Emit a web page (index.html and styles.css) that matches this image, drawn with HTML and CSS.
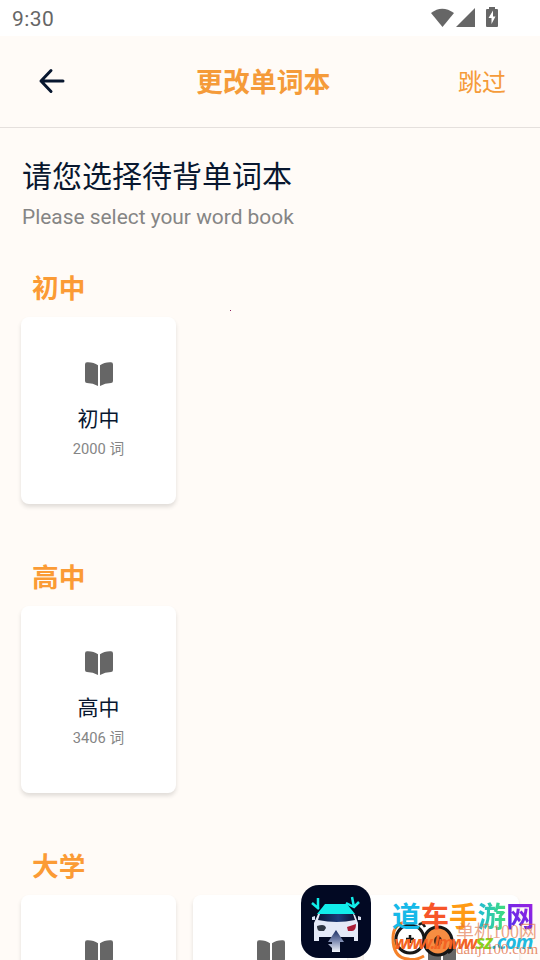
FILE: index.html
```html
<!DOCTYPE html>
<html lang="zh-CN">
<head>
<meta charset="utf-8">
<title>更改单词本</title>
<link rel="stylesheet" href="styles.css">
</head>
<body>
<svg class="symbols" aria-hidden="true">
  <symbol id="book" viewBox="0 0 30 26"><path d="M1 3.5Q1 1.3 3 1.3Q9.5 1 14 4.2V25Q9 22 3 22Q1 22 1 20ZM16 4.2Q20.500 1 27 1.300Q29 1.300 29 3.500V20Q29 22 27 22Q21 22 16 25Z"/></symbol>
</svg>
<div class="screen">
  <div class="status">
    <span class="time">9:30</span>
    <svg class="indicators" width="70" height="22" viewBox="0 0 70 22">
      <path d="M1 6Q12-2.500 24 6L12.500 20Z"/>
      <path d="M26 20L45 1V20Z"/>
      <path fill-rule="evenodd" d="M57 2H59V0H65V2H67Q68 2 68 3V19Q68 20 67 20H57Q56 20 56 19V3Q56 2 57 2ZM63 3.500L58.500 11H61.500V17L65.500 9.500H63Z"/>
    </svg>
  </div>
  <header class="bar">
    <svg class="back" width="28" height="26" viewBox="0 0 28 26"><path d="M13 2.500L3 13L13 23.500M3 13H25"/></svg>
    <h1>更改单词本</h1>
    <span class="skip">跳过</span>
  </header>
  <main>
    <h2>请您选择待背单词本</h2>
    <p class="hint">Please select your word book</p>
    <section>
      <h3>初中</h3>
      <div class="cards">
        <article class="card"><svg class="book"><use href="#book"/></svg><strong>初中</strong><small>2000 词</small></article>
      </div>
    </section>
    <section>
      <h3>高中</h3>
      <div class="cards">
        <article class="card"><svg class="book"><use href="#book"/></svg><strong>高中</strong><small>3406 词</small></article>
      </div>
    </section>
    <section>
      <h3>大学</h3>
      <div class="cards">
        <article class="card"><svg class="book"><use href="#book"/></svg></article>
        <article class="card"><svg class="book"><use href="#book"/></svg></article>
        <article class="card"><svg class="book"><use href="#book"/></svg></article>
      </div>
    </section>
  </main>
  <i class="dot"></i>
  <svg class="app-logo" width="70" height="74" viewBox="0 0 70 74">
    <defs>
      <linearGradient id="glass"><stop offset="0" stop-color="#091637"/><stop offset=".55" stop-color="#1c3a78"/><stop offset="1" stop-color="#0a1230"/></linearGradient>
      <linearGradient id="arrow" x1="0" y1="0" x2="0" y2="1"><stop offset="0" stop-color="#172b61"/><stop offset=".45" stop-color="#7482ab"/><stop offset="1" stop-color="#f2f5fc"/></linearGradient>
    </defs>
    <rect width="70" height="73" rx="18" fill="#020923"/>
    <path d="M17 29L20 28H51L54 30L57 38V56H53V52H18V56H13V38Z" fill="#e4e9f7"/>
    <path d="M16 29L24 19H46L54 29Z" fill="#12edea"/>
    <path d="M19 29H52L54 35Q36 39 17 35Z" fill="url(#glass)"/>
    <path d="M11 32L14 31V35L11 35ZM57 31L60 32V35H57Z" fill="#dce3f3"/>
    <path d="M16 41Q24 38 25 43L23 46H19Q16 46 16 41Z" fill="#303743"/>
    <path d="M46 42L55 39Q55 46 51 46H47Z" fill="#a91d36"/>
    <path d="M35 45L43 57H39V67H31V63L27 59H31V57H27Z" fill="url(#arrow)"/>
    <path d="M17 13V23.500M11 18L18 24M51 12L53 22M45 18L53 22L58 17" fill="none" stroke="#12edea" stroke-width="2.500"/>
  </svg>
  <div class="watermark">
    <svg class="rings" width="68" height="46" viewBox="0 0 68 46">
      <path d="M16 2Q3 4 3 18Q3 38 18 39Q25 41 34 36" fill="none" stroke="#f5822a" stroke-width="3"/>
      <circle cx="20" cy="19" r="14" fill="none" stroke="#171717" stroke-width="3"/>
      <path d="M16 19H24M20 15V23M35 7Q32 1 29 5M60 16Q68 27 58 33" fill="none" stroke="#171717" stroke-width="2.500"/>
      <circle cx="48" cy="21" r="14" fill="#f78d42" stroke="#171717" stroke-width="3"/>
      <ellipse cx="48" cy="21" rx="4" ry="5" fill="#4b2716"/>
    </svg>
    <span class="brand"><b class="c1">道</b><b class="c2">车</b><b class="c3">手</b><b class="c4">游</b><b class="c5">网</b></span>
    <span class="url"><b class="u1">www.lmww</b><b class="u2">sz</b><b class="u3">.com</b></span>
    <span class="mark-cn">单机100网</span>
    <span class="mark-url">danji100.com</span>
  </div>
</div>
</body>
</html>
```
FILE: styles.css
```css
* { box-sizing: border-box; }
body { margin: 0; font-family: Roboto, "Noto Sans CJK SC", sans-serif; }
h1, h2, h3, p { margin: 0; }
.symbols { position: absolute; width: 0; height: 0; }
.screen { position: relative; width: 540px; height: 960px; overflow: hidden; background: #fffbf7; }
.status { display: flex; justify-content: space-between; height: 36px; padding: 7px 40px 0 12px; background: #fff; color: #666; }
.time { font-size: 21px; line-height: 24px; letter-spacing: .4px; }
.indicators { fill: #666; }
.bar { display: flex; align-items: center; height: 92px; padding: 0 34px 2px 38px; border-bottom: 1px solid #e5e0dd; color: #f59b3a; }
.back { fill: none; stroke: #08172f; stroke-width: 3; stroke-linecap: round; stroke-linejoin: round; }
.bar h1 { font-size: 26.9px; line-height: 40px; padding-top: 4px; margin-left: 130px; }
.skip { margin-left: auto; font-size: 24px; line-height: 36px; padding-top: 5px; }
main { padding: 26px 21px 0; }
h2 { padding-left: 1px; font-size: 30px; line-height: 46px; font-weight: 400; color: #08172f; }
.hint { padding-left: 1px; margin-top: 4px; height: 26px; font-size: 20.9px; line-height: 26px; color: #858585; }
section { height: 289px; padding-top: 39px; }
h3 { padding-left: 11px; font-size: 26.7px; line-height: 40px; color: #fb9b35; }
.cards { display: flex; gap: 17px; padding-top: 8px; }
.card { display: flex; flex-direction: column; align-items: center; width: 155px; height: 187px; padding-top: 44px; border-radius: 8px; background: #fff; box-shadow: 0 3px 4px rgba(0, 0, 0, .12); }
.book { width: 30px; height: 26px; flex: none; margin-left: 1px; fill: #666; }
.card strong { margin-top: 16px; font-size: 21px; line-height: 32px; font-weight: 400; color: #08172f; }
.card small { margin-top: 2px; font-size: 14.7px; line-height: 24px; color: #858585; }
.dot { position: absolute; left: 230px; top: 310px; width: 1px; height: 1px; background: #902060; }
.app-logo { position: absolute; left: 301px; top: 885px; }
.watermark { position: absolute; left: 390px; top: 896px; width: 150px; height: 64px; white-space: nowrap; }
.watermark > * { position: absolute; }
.rings { left: 0; top: 24px; }
.mark-cn { left: 66px; top: 24px; font: 18px/24px "Liberation Serif", "Noto Sans CJK SC", serif; color: rgba(226, 114, 68, .65); }
.mark-url { left: 66px; top: 44px; font: 15px/18px "Liberation Serif", serif; color: rgba(222, 104, 58, .75); }
.brand { left: 2px; top: 1px; font-size: 28.5px; line-height: 41px; }
.brand b, .url b { font-weight: 700; }
.c1 { color: #16b9e8; }
.c2 { color: #f75529; }
.c3 { color: #ff9b13; }
.c4 { background: linear-gradient(90deg, #20b9d5, #41df7a); background-clip: text; color: transparent; }
.c5 { background: linear-gradient(45deg, #4930ed, #a020df); background-clip: text; color: transparent; }
.url { left: 4px; top: 34px; font: italic 700 19.5px/24px "Open Sans", sans-serif; letter-spacing: -.9px; }
.u1 { color: #f46424; font-size: 18px; letter-spacing: -2px; }
.u2 { color: #83d51c; }
.u3 { color: #20b9df; }
```
